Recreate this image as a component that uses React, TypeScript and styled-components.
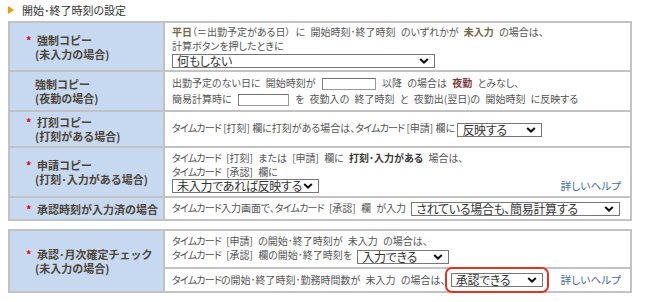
import React from "react";
import styled, { createGlobalStyle } from "styled-components";

const GlobalStyle = createGlobalStyle`
  html, body {
    margin: 0;
    padding: 0;
    background: #fff;
  }
  body {
    font-family: "Noto Sans CJK JP", "Noto Sans", sans-serif;
    color: #555;
  }
`;

const Page = styled.div`
  padding: 3px 0 0 8px;
  width: 624px;
`;

const SectionTitle = styled.h2`
  display: flex;
  align-items: center;
  gap: 8px;
  margin: 0 0 4px;
  font-size: 11px;
  font-weight: normal;
  line-height: 14px;
  color: #333;
  font-feature-settings: "palt";

  &::before {
    content: "";
    border-left: 6px solid #f39800;
    border-top: 4px solid transparent;
    border-bottom: 4px solid transparent;
  }
`;

const SettingTable = styled.table`
  width: 624px;
  border-collapse: collapse;
  table-layout: fixed;
  border: 2px solid #c2c2c2;
  margin-bottom: 8px;
`;

const LabelCell = styled.th`
  box-sizing: border-box;
  width: 155px;
  background: #c6d9f0;
  border: 2px solid #c2c2c2;
  text-align: left;
  vertical-align: middle;
  padding: 0 2px 0 25px;
  font-size: 11px;
  font-weight: bold;
  line-height: 14px;
  color: #4f4538;
  white-space: nowrap;
`;

const Req = styled.span`
  display: inline-block;
  width: 11px;
  margin-left: -9px;
  color: #e60012;
`;

const Sub = styled.span`
  display: block;
`;

const ValueCell = styled.td<{ $h: number }>`
  height: ${(p) => p.$h}px;
  border: 2px solid #c2c2c2;
  padding: 0 8px 0 7px;
  vertical-align: middle;
  font-size: 10px;
  word-spacing: 3px;
  line-height: 14px;
  color: #555;
  font-feature-settings: "palt";
  white-space: nowrap;
`;

const Line = styled.div<{ $gap?: number; $tight?: boolean }>`
  min-height: 14px;
  margin-top: ${(p) => p.$gap ?? 0}px;
  ${(p) => (p.$tight ? "word-spacing: 0;" : "")}
`;

const SpreadLine = styled.div`
  display: flex;
  align-items: center;
  white-space: pre;
`;

/* katakana terms render narrower in the original font */
const Term = styled.span`
  letter-spacing: -0.8px;
`;

const Em = styled.b<{ $tone?: "olive" | "night" | "dark" }>`
  font-weight: bold;
  color: ${(p) =>
    p.$tone === "night" ? "#7a3b3b" : p.$tone === "dark" ? "#3a3a3a" : "#7a6644"};
`;

const TimeInput = styled.input<{ $w: number }>`
  box-sizing: border-box;
  width: ${(p) => p.$w}px;
  height: 12px;
  margin: 0 1px;
  padding: 0;
  vertical-align: middle;
  border: 1px solid #999;
  border-top-color: #707070;
  border-left-color: #808080;
  background: #fff;
`;

const SelectWrap = styled.span<{ $w: number; $mark?: boolean }>`
  position: relative;
  display: inline-block;
  flex-shrink: 0;
  vertical-align: middle;
  width: ${(p) => p.$w}px;
  height: 14px;
  border-radius: 1px;
  word-spacing: 0;
  outline: ${(p) => (p.$mark ? "2px solid #e2331f" : "none")};
  outline-offset: 4px;
`;

const SelectEl = styled.select`
  appearance: none;
  -webkit-appearance: none;
  box-sizing: border-box;
  display: block;
  width: 100%;
  height: 100%;
  margin: 0;
  padding: 0 12px 0 4px;
  border: 1px solid #767676;
  border-radius: 0;
  background: #fff;
  font-family: "Noto Sans CJK JP", sans-serif;
  font-size: 12px;
  letter-spacing: -0.3px;
  line-height: 12px;
  font-feature-settings: "palt";
  color: #333;
`;

const Chevron = styled.svg`
  position: absolute;
  right: 6px;
  top: 4px;
  width: 10px;
  height: 6px;
  pointer-events: none;
`;

const HelpLink = styled.a`
  margin-left: auto;
  padding-right: 1px;
  color: #3d6cb4;
  font-size: 10.7px;
  word-spacing: 0;
  text-decoration: none;
`;

function Select({ w, value, mark }: { w: number; value: string; mark?: boolean }) {
  return (
    <SelectWrap $w={w} $mark={mark}>
      <SelectEl defaultValue={value}>
        <option>{value}</option>
      </SelectEl>
      <Chevron viewBox="0 0 10 6">
        <path d="M1.2 1 L5 4.6 L8.8 1" fill="none" stroke="#111" strokeWidth="2" />
      </Chevron>
    </SelectWrap>
  );
}

const TC = () => <Term>タイムカード</Term>;

export default function App() {
  return (
    <Page>
      <GlobalStyle />
      <SectionTitle>開始･終了時刻の設定</SectionTitle>

      <SettingTable>
        <tbody>
          <tr>
            <LabelCell>
              <Req>*</Req>強制コピー
              <Sub>(未入力の場合)</Sub>
            </LabelCell>
            <ValueCell $h={47}>
              <Line>
                <Em>平日</Em>（＝出勤予定がある日） に 開始時刻･終了時刻 のいずれかが <Em>未入力</Em> の場合は、
              </Line>
              <Line>計算ボタンを押したときに</Line>
              <Line>
                <Select w={263} value="何もしない" />
              </Line>
            </ValueCell>
          </tr>
          <tr>
            <LabelCell>
              強制コピー
              <Sub>(夜勤の場合)</Sub>
            </LabelCell>
            <ValueCell $h={38}>
              <Line>
                出勤予定のない日に 開始時刻が <TimeInput $w={54} /> 以降 の場合は <Em $tone="night">夜勤</Em> とみなし、
              </Line>
              <Line $gap={2}>
                簡易計算時に <TimeInput $w={51} /> を 夜勤入の 終了時刻 と 夜勤出(翌日)の 開始時刻 に反映する
              </Line>
            </ValueCell>
          </tr>
          <tr>
            <LabelCell>
              <Req>*</Req>打刻コピー
              <Sub>(打刻がある場合)</Sub>
            </LabelCell>
            <ValueCell $h={34}>
              <Line $tight>
                <TC /> [打刻] 欄に打刻がある場合は、<TC /> [申請] 欄に <Select w={85} value="反映する" />
              </Line>
            </ValueCell>
          </tr>
          <tr>
            <LabelCell>
              <Req>*</Req>申請コピー
              <Sub>(打刻･入力がある場合)</Sub>
            </LabelCell>
            <ValueCell $h={48}>
              <Line>
                <TC /> [打刻] または [申請] 欄に <Em $tone="dark">打刻･入力がある</Em> 場合は、
              </Line>
              <Line>
                <TC /> [承認] 欄に
              </Line>
              <SpreadLine>
                <Select w={147} value="未入力であれば反映する" />
                <HelpLink href="#">詳しいヘルプ</HelpLink>
              </SpreadLine>
            </ValueCell>
          </tr>
          <tr>
            <LabelCell>
              <Req>*</Req>承認時刻が入力済の場合
            </LabelCell>
            <ValueCell $h={21}>
              <Line>
                <TC />入力画面で、<TC /> [承認] 欄 が入力 <Select w={209} value="されている場合も、簡易計算する" />
              </Line>
            </ValueCell>
          </tr>
        </tbody>
      </SettingTable>

      <SettingTable>
        <tbody>
          <tr>
            <LabelCell rowSpan={2}>
              <Req>*</Req>承認･月次確定チェック
              <Sub>(未入力の場合)</Sub>
            </LabelCell>
            <ValueCell $h={36}>
              <Line>
                <TC /> [申請] の開始･終了時刻が 未入力 の場合は、
              </Line>
              <Line>
                <TC /> [承認] 欄の開始･終了時刻を <Select w={92} value="入力できる" />
              </Line>
            </ValueCell>
          </tr>
          <tr>
            <ValueCell $h={22}>
              <SpreadLine>
                <TC />の開始･終了時刻･勤務時間数が 未入力 の場合は、 <Select w={92} value="承認できる" mark />
                <HelpLink href="#">詳しいヘルプ</HelpLink>
              </SpreadLine>
            </ValueCell>
          </tr>
        </tbody>
      </SettingTable>
    </Page>
  );
}
